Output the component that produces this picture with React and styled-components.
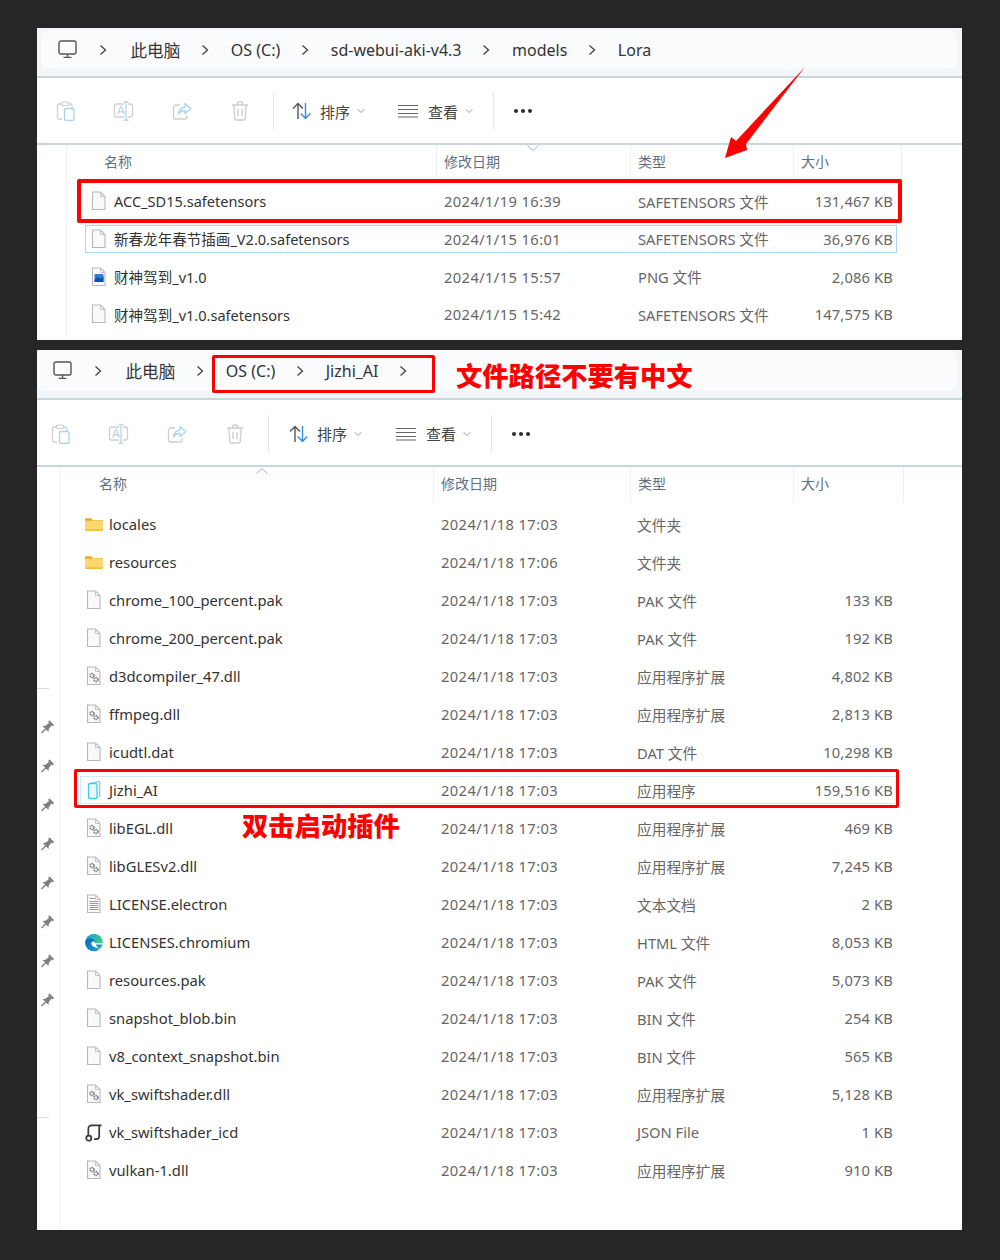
import React from "react";
import styled, { createGlobalStyle } from "styled-components";

const Global = createGlobalStyle`
  html, body { margin: 0; padding: 0; background: #262626; }
  body { font-family: "Noto Sans", "Noto Sans CJK SC", sans-serif; }
`;

const Page = styled.div`
  width: 1000px;
  height: 1260px;
  box-sizing: border-box;
  padding: 28px 38px 30px 37px;
  display: flex;
  flex-direction: column;
  gap: 10px;
  background: #262626;
`;
const Window = styled.section`
  position: relative;
  background: #fff;
  height: ${(p) => p.$h}px;
  display: flex;
  flex-direction: column;
  overflow: hidden;
`;
const AddressBar = styled.div`
  height: ${(p) => p.$h}px;
  box-sizing: border-box;
  flex: none;
  background: #f2f6f8;
  border-bottom: 2px solid #c6d6d9;
  padding: ${(p) => p.$top}px 5px 0 ${(p) => p.$inset}px;
`;
const AddressInner = styled.div`
  height: ${(p) => p.$h}px;
  background: #f9fbfd;
  border-radius: 8px;
  display: flex;
  align-items: center;
  padding-left: ${(p) => p.$pad}px;
  font-size: 16px;
  color: #333;
`;
const Crumb = styled.span`
  white-space: nowrap;
`;
const RootCrumb = styled.span`
  white-space: nowrap;
  margin-left: 2px;
  font-size: 16.6px;
`;
const Chevron = styled.svg`
  width: 8px;
  height: 12px;
  margin: 0 22px 0 20.5px;
  flex: none;
`;
const MonitorIcon = styled.svg`
  width: 19px;
  height: 19px;
  flex: none;
  margin-right: 1px;
`;
const Toolbar = styled.div`
  height: ${(p) => p.$h}px;
  flex: none;
  box-sizing: border-box;
  border-bottom: 2px solid #c6d6d9;
  display: flex;
  align-items: center;
  padding-left: ${(p) => p.$pad}px;
  padding-top: ${(p) => p.$top}px;
`;
const ToolIcon = styled.div`
  width: 46px;
  margin-right: 12px;
  display: flex;
  justify-content: center;
`;
const ToolDivider = styled.div`
  width: 1px;
  height: 38px;
  background: #e6e9ea;
  margin-left: ${(p) => p.$ml}px;
`;
const ToolMenu = styled.div`
  display: flex;
  align-items: center;
  font-size: 15px;
  color: #444;
  margin-left: ${(p) => p.$ml}px;
  gap: 8px;
`;
const LinesIcon = styled.svg`
  width: 20px;
  height: 14px;
  margin-right: 2px;
`;
const MiniChevron = styled.svg`
  width: 8px;
  height: 6px;
  margin-left: -1px;
`;
const Dots = styled.div`
  display: flex;
  gap: 3px;
  margin-left: 20px;
  span {
    width: 4px;
    height: 4px;
    border-radius: 50%;
    background: #2b2b2b;
  }
`;
const Content = styled.div`
  flex: 1;
  display: flex;
  min-height: 0;
`;
const Sidebar = styled.aside`
  flex: none;
  width: ${(p) => p.$w}px;
  display: flex;
  flex-direction: column;
`;
const SideRule = styled.div`
  height: 1px;
  width: 12px;
  background: #ddd;
  margin-top: ${(p) => p.$mt}px;
`;
const Pins = styled.div`
  display: flex;
  flex-direction: column;
  gap: 23px;
  margin: 31px 0 0 2px;
`;
const Main = styled.div`
  flex: 1;
  min-width: 0;
  border-left: 1px solid #f1f2f3;
`;
const HeaderRow = styled.div`
  display: grid;
  grid-template-columns: ${(p) => p.$cols};
  height: ${(p) => p.$h}px;
  font-size: 14px;
  color: #5f6f84;
`;
const HeaderCell = styled.div`
  display: flex;
  align-items: center;
  padding-left: ${(p) => p.$pad}px;
  padding-bottom: ${(p) => p.$bottom}px;
  border-right: 1px solid #eeeff0;
  margin-left: -1px;
`;
const RowList = styled.div`
  display: flex;
  flex-direction: column;
  gap: ${(p) => p.$gap}px;
  padding: ${(p) => p.$top}px 0 0 ${(p) => p.$left}px;
`;
const Row = styled.div`
  display: grid;
  grid-template-columns: ${(p) => p.$cols};
  width: ${(p) => p.$w}px;
  height: 28px;
  box-sizing: border-box;
  align-items: center;
  border: 1px solid ${(p) => p.$border || "transparent"};
  font-size: 14.7px;
  color: #666;
`;
const NameCell = styled.div`
  display: flex;
  align-items: center;
  gap: 6px;
  padding-left: 4px;
  color: #333;
  font-size: ${(p) => p.$size}px;
  white-space: nowrap;
`;
const IconSlot = styled.div`
  width: 18px;
  height: 20px;
  display: flex;
  align-items: center;
  justify-content: center;
  flex: none;
`;
const DateCell = styled.div`
  padding-left: ${(p) => p.$pad}px;
  white-space: nowrap;
  letter-spacing: 0.4px;
`;
const TypeCell = styled.div`
  padding-left: ${(p) => p.$pad}px;
  white-space: nowrap;
`;
const SizeCell = styled.div`
  text-align: right;
  padding-right: 3px;
  white-space: nowrap;
  letter-spacing: 0.15px;
`;
const SortCaret = styled.svg`
  position: absolute;
  left: ${(p) => p.$x}px;
  top: ${(p) => p.$y}px;
  width: 12px;
  height: 6px;
`;
const RedBox = styled.div`
  position: absolute;
  left: ${(p) => p.$x}px;
  top: ${(p) => p.$y}px;
  width: ${(p) => p.$w}px;
  height: ${(p) => p.$h}px;
  box-sizing: border-box;
  border: ${(p) => p.$t}px solid #fe0000;
  border-radius: 2px;
`;
const Callout = styled.div`
  position: absolute;
  left: ${(p) => p.$x}px;
  top: ${(p) => p.$y}px;
  font-family: "Noto Sans CJK SC", sans-serif;
  font-weight: 900;
  font-size: 26.3px;
  line-height: 32px;
  color: #fe0000;
  white-space: nowrap;
`;
const ArrowMark = styled.svg`
  position: absolute;
  left: 680px;
  top: 30px;
  width: 100px;
  height: 110px;
`;

const Chev = () => (
  <Chevron viewBox="0 0 8 12">
    <path d="M1.5 1.5 6.5 6l-5 4.5" fill="none" stroke="#444" strokeWidth="1.3" />
  </Chevron>
);
const Monitor = () => (
  <MonitorIcon viewBox="0 0 19 19">
    <rect x="1" y="1" width="17" height="13" rx="2" fill="none" stroke="#555" strokeWidth="1.4" />
    <path d="M9.5 14v3M5.5 17.4h8" stroke="#555" strokeWidth="1.4" />
  </MonitorIcon>
);
const Paste = () => (
  <svg width="20" height="20" viewBox="0 0 20 20" fill="none">
    <path d="M6 3H3a1.5 1.5 0 0 0-1.500 1.500v12A1.500 1.500 0 0 0 3 18h3" stroke="#cfcfcf" strokeWidth="1.300" />
    <path d="M13 3h1.500A1.500 1.500 0 0 1 16 4.500V7" stroke="#cfcfcf" strokeWidth="1.300" />
    <rect x="5.500" y="1" width="7" height="3.500" rx="1" stroke="#cfcfcf" strokeWidth="1.200" />
    <rect x="8.500" y="7.500" width="9.500" height="12" rx="2" stroke="#a9d3f2" strokeWidth="1.300" />
  </svg>
);
const Rename = () => (
  <svg width="22" height="20" viewBox="0 0 22 20" fill="none">
    <path d="M11 3H3.500A2 2 0 0 0 1.500 5v9a2 2 0 0 0 2 2H11M15 3h2a2.500 2.500 0 0 1 2.500 2.500v8A2.500 2.500 0 0 1 17 16h-2" stroke="#cfcfcf" strokeWidth="1.300" />
    <path d="M13 1v18M10.500.8h5M10.500 19.200h5" stroke="#a9d3f2" strokeWidth="1.200" />
    <path d="M4.500 13.500 7.600 5.500h.8l3.100 8M5.800 10.800h4.400" stroke="#bcd2e2" strokeWidth="1.200" />
  </svg>
);
const Share = () => (
  <svg width="20" height="18" viewBox="0 0 20 18" fill="none">
    <path d="M8 3H3.500A2 2 0 0 0 1.500 5v10a2 2 0 0 0 2 2H13a2 2 0 0 0 2-2v-2" stroke="#cfcfcf" strokeWidth="1.300" />
    <path d="M13 1.500 18.800 6.500 13 11.500V8.500c-3 0-5 1-6.500 3.500 .4-4 2.500-6.500 6.500-7z" stroke="#a9d3f2" strokeWidth="1.300" strokeLinejoin="round" />
  </svg>
);
const Trash = () => (
  <svg width="18" height="20" viewBox="0 0 18 20" fill="none" stroke="#cdcdcd" strokeWidth="1.300">
    <path d="M1 4h16M6.500 4V2.500A1.500 1.500 0 0 1 8 1h2a1.500 1.500 0 0 1 1.500 1.500V4" />
    <path d="M2.800 4l1 13.500A1.500 1.500 0 0 0 5.300 19h7.400a1.500 1.500 0 0 0 1.500-1.500L15.200 4M7 8v7M11 8v7" />
  </svg>
);
const SortArrows = () => (
  <svg width="20" height="18" viewBox="0 0 20 18" fill="none" strokeWidth="1.400">
    <path d="M6 17V1.500M1 6.500 6 1.500l5 5" stroke="#555" />
    <path d="M13.500 1v15.500M8.800 11.500l4.700 5 4.800-5" stroke="#2f8fdd" />
  </svg>
);
const Lines = () => (
  <LinesIcon viewBox="0 0 20 14" stroke="#666" strokeWidth="1.200">
    <path d="M0 1.500h20M0 5.500h20M0 9.500h20M0 13h20" />
  </LinesIcon>
);
const MiniChev = () => (
  <MiniChevron viewBox="0 0 8 6" fill="none">
    <path d="M.7 1.200 4 4.500l3.300-3.300" stroke="#999" />
  </MiniChevron>
);
const Pin = () => (
  <svg width="15" height="16" viewBox="0 0 16 16" fill="#7f7f7f">
    <g transform="rotate(45 8 8)">
      <rect x="4.500" y="0" width="7" height="2.200" rx=".5" />
      <path d="M6 2h4l.5 5 2 2.500h-9l2-2.500z" />
      <rect x="7.300" y="9" width="1.400" height="6.500" />
    </g>
  </svg>
);

const Page1 = () => (
  <path d="M1.500 1H9.500L14 5.500V18.500H1.500z" fill="#f9f9f9" stroke="#b8b8b8" strokeWidth="1.100" />
);
const Fold = () => <path d="M9.500 1v4.500H14" fill="none" stroke="#c4c4c4" />;
const FileIcon = () => (
  <svg width="16" height="20" viewBox="0 0 16 20">
    <Page1 />
    <Fold />
  </svg>
);
const PngIcon = () => (
  <svg width="16" height="20" viewBox="0 0 16 20">
    <Page1 />
    <Fold />
    <rect x="3.500" y="7" width="9" height="8" rx="1" fill="#2a7fd4" />
    <path d="M3.500 13 7 10l2.500 2 3-2.500V15h-9z" fill="#0f4fa5" />
  </svg>
);
const Gear = ({ x, y, r }) => (
  <circle cx={x} cy={y} r={r} fill="none" stroke="#7d7d7d" strokeWidth={r * 0.9} strokeDasharray="1.300 .6" />
);
const DllIcon = () => (
  <svg width="16" height="20" viewBox="0 0 16 20">
    <Page1 />
    <Fold />
    <Gear x="6" y="9.500" r="1.900" />
    <Gear x="10" y="13.500" r="1.900" />
  </svg>
);
const TextIcon = () => (
  <svg width="16" height="20" viewBox="0 0 16 20">
    <Page1 />
    <Fold />
    <path d="M3.500 4.500h5M3.500 7.500h9M3.500 9.500h9M3.500 11.500h9M3.500 13.500h9M3.500 15.500h9" stroke="#9a9a9a" strokeWidth="1" />
  </svg>
);
const FolderIcon = () => (
  <svg width="19" height="15" viewBox="0 0 19 15">
    <path d="M0 2a1 1 0 0 1 1-1h5.500l2 2H19v2H0z" fill="#eda81f" />
    <path d="M0 3.500h18a1 1 0 0 1 1 1V13a1 1 0 0 1-1 1H1a1 1 0 0 1-1-1z" fill="#fdd66f" />
    <path d="M0 12.800h19V13a1 1 0 0 1-1 1H1a1 1 0 0 1-1-1z" fill="#efb030" />
  </svg>
);
const JizhiIcon = () => (
  <svg width="15" height="20" viewBox="0 0 15 20" fill="none">
    <path d="M3 3.500 11.500 1.500a1 1 0 0 1 1.200 1V15.500a1 1 0 0 1-.8 1L5 18.500" stroke="#7cc8ee" strokeWidth="1.200" />
    <rect x="1.500" y="3.500" width="8.500" height="15" rx="1.500" fill="#e8f8ff" stroke="#35cdf2" strokeWidth="1.300" />
  </svg>
);
const EdgeIcon = () => (
  <svg width="21" height="21" viewBox="0 0 20 20">
    <defs>
      <linearGradient id="edgeTop" x1="0" y1="0" x2="1" y2="1">
        <stop offset="0" stopColor="#0f9fd0" />
        <stop offset="1" stopColor="#5fdc6a" />
      </linearGradient>
      <linearGradient id="edgeLow" x1="0" y1="0" x2="1" y2="1">
        <stop offset="0" stopColor="#0a64b8" />
        <stop offset="1" stopColor="#1fa4e0" />
      </linearGradient>
    </defs>
    <circle cx="10" cy="10" r="9.800" fill="url(#edgeTop)" />
    <path d="M.3 9.500C1 6 4.500 4.800 7.500 5.500 10.500 6.300 11.500 8.500 11 10.500H18.500c.6 3-.5 5-2.500 5.200-1 .1-1.800 0-2.800-.5 2 2 .5 4.700-3.200 4.600C4.500 19.800.1 15.500.3 9.500z" fill="url(#edgeLow)" />
    <path d="M7 11c0-1.500 1.200-2.300 2.500-2.100 1 .2 1.500 .9 1.500 1.900h8.800v1.500H12.500c-.3 1.500 .8 2.600 2.600 2.900-1.800.9-4.300 .5-5.600-.6C8 13.700 7 12.600 7 11z" fill="#fff" />
  </svg>
);
const JsonIcon = () => (
  <svg width="19" height="19" viewBox="0 0 19 19" fill="none" stroke="#3a3a3a" strokeWidth="1.800">
    <path d="M3.500 13V5.500A3.500 3.500 0 0 1 7 2h10.500M15 2.500V13.500A3 3 0 0 1 12 16.500H9.500" />
    <circle cx="4" cy="15.500" r="2.700" />
  </svg>
);

const icons = {
  file: FileIcon,
  png: PngIcon,
  dll: DllIcon,
  text: TextIcon,
  folder: FolderIcon,
  jizhi: JizhiIcon,
  edge: EdgeIcon,
  json: JsonIcon,
};

const d0 = "2024/1/18 17:03";
const upperRows = [
  { i: "file", n: "ACC_SD15.safetensors", d: "2024/1/19 16:39", t: "SAFETENSORS 文件", s: "131,467 KB" },
  { i: "file", n: "新春龙年春节插画_V2.0.safetensors", d: "2024/1/15 16:01", t: "SAFETENSORS 文件", s: "36,976 KB", b: "#a9d6f8" },
  { i: "png", n: "财神驾到_v1.0", d: "2024/1/15 15:57", t: "PNG 文件", s: "2,086 KB" },
  { i: "file", n: "财神驾到_v1.0.safetensors", d: "2024/1/15 15:42", t: "SAFETENSORS 文件", s: "147,575 KB" },
];
const lowerRows = [
  { i: "folder", n: "locales", d: d0, t: "文件夹", s: "" },
  { i: "folder", n: "resources", d: "2024/1/18 17:06", t: "文件夹", s: "" },
  { i: "file", n: "chrome_100_percent.pak", d: d0, t: "PAK 文件", s: "133 KB" },
  { i: "file", n: "chrome_200_percent.pak", d: d0, t: "PAK 文件", s: "192 KB" },
  { i: "dll", n: "d3dcompiler_47.dll", d: d0, t: "应用程序扩展", s: "4,802 KB" },
  { i: "dll", n: "ffmpeg.dll", d: d0, t: "应用程序扩展", s: "2,813 KB" },
  { i: "file", n: "icudtl.dat", d: d0, t: "DAT 文件", s: "10,298 KB" },
  { i: "jizhi", n: "Jizhi_AI", d: d0, t: "应用程序", s: "159,516 KB", b: "#d3e9fa" },
  { i: "dll", n: "libEGL.dll", d: d0, t: "应用程序扩展", s: "469 KB" },
  { i: "dll", n: "libGLESv2.dll", d: d0, t: "应用程序扩展", s: "7,245 KB" },
  { i: "text", n: "LICENSE.electron", d: d0, t: "文本文档", s: "2 KB" },
  { i: "edge", n: "LICENSES.chromium", d: d0, t: "HTML 文件", s: "8,053 KB" },
  { i: "file", n: "resources.pak", d: d0, t: "PAK 文件", s: "5,073 KB" },
  { i: "file", n: "snapshot_blob.bin", d: d0, t: "BIN 文件", s: "254 KB" },
  { i: "file", n: "v8_context_snapshot.bin", d: d0, t: "BIN 文件", s: "565 KB" },
  { i: "dll", n: "vk_swiftshader.dll", d: d0, t: "应用程序扩展", s: "5,128 KB" },
  { i: "json", n: "vk_swiftshader_icd", d: d0, t: "JSON File", s: "1 KB" },
  { i: "dll", n: "vulkan-1.dll", d: d0, t: "应用程序扩展", s: "910 KB" },
];

const ToolbarContent = ({ h, pad, top, m0, m1, m2, m3 }) => (
  <Toolbar $h={h} $pad={pad} $top={top}>
    <ToolIcon><Paste /></ToolIcon>
    <ToolIcon><Rename /></ToolIcon>
    <ToolIcon><Share /></ToolIcon>
    <ToolIcon><Trash /></ToolIcon>
    <ToolDivider $ml={m0} />
    <ToolMenu $ml={m1}><SortArrows />排序<MiniChev /></ToolMenu>
    <ToolMenu $ml={m2}><Lines />查看<MiniChev /></ToolMenu>
    <ToolDivider $ml={m3} />
    <Dots><span /><span /><span /></Dots>
  </Toolbar>
);

const FileRows = ({ rows, cols, pads, w, size }) =>
  rows.map((r) => {
    const Ico = icons[r.i];
    return (
      <Row key={r.n} $cols={cols} $border={r.b} $w={w}>
        <NameCell $size={size}><IconSlot><Ico /></IconSlot>{r.n}</NameCell>
        <DateCell $pad={pads[0]}>{r.d}</DateCell>
        <TypeCell $pad={pads[1]}>{r.t}</TypeCell>
        <SizeCell>{r.s}</SizeCell>
      </Row>
    );
  });

export default function App() {
  return (
    <Page>
      <Global />
      <Window $h={312}>
        <AddressBar $h={50} $top={2} $inset={4}>
          <AddressInner $h={39} $pad={17}>
            <Monitor />
            <Chev /><RootCrumb>此电脑</RootCrumb>
            <Chev /><Crumb>OS (C:)</Crumb>
            <Chev /><Crumb>sd-webui-aki-v4.3</Crumb>
            <Chev /><Crumb>models</Crumb>
            <Chev /><Crumb>Lora</Crumb>
          </AddressInner>
        </AddressBar>
        <ToolbarContent h={67} pad={6} top={1} m0={-2} m1={18} m2={33} m3={20} />
        <Content>
          <Sidebar $w={29} />
          <Main>
            <HeaderRow $h={33} $cols="370px 194px 163px 108px">
              <HeaderCell $pad={38} $bottom={2}>名称</HeaderCell>
              <HeaderCell $pad={8} $bottom={2}>修改日期</HeaderCell>
              <HeaderCell $pad={8} $bottom={2}>类型</HeaderCell>
              <HeaderCell $pad={8} $bottom={2}>大小</HeaderCell>
            </HeaderRow>
            <RowList $gap={9.75} $top={9} $left={18}>
              <FileRows rows={upperRows} cols="351px 194px 163px 1fr" pads={[7, 7]} w={812} size={14.55} />
            </RowList>
          </Main>
        </Content>
        <SortCaret $x={490} $y={117} viewBox="0 0 12 6"><path d="M.5.500 6 5.500 11.500.5" fill="none" stroke="#aaa" /></SortCaret>
        <RedBox $x={40} $y={151} $w={825} $h={44} $t={4} />
        <ArrowMark viewBox="680 30 100 110">
          <polygon points="768,39 709,116 710,122 688,130 694,109 699,113" fill="#fe0000" />
        </ArrowMark>
      </Window>
      <Window $h={880}>
        <AddressBar $h={50} $top={0} $inset={0}>
          <AddressInner $h={41} $pad={16}>
            <Monitor />
            <Chev /><RootCrumb>此电脑</RootCrumb>
            <Chev /><Crumb>OS (C:)</Crumb>
            <Chev /><Crumb>Jizhi_AI</Crumb>
            <Chev />
          </AddressInner>
        </AddressBar>
        <ToolbarContent h={67} pad={1} top={2} m0={-2} m1={20} m2={34} m3={20} />
        <Content>
          <Sidebar $w={23}>
            <SideRule $mt={221} />
            <Pins>
              {Array.from({ length: 8 }, (_, i) => <Pin key={i} />)}
            </Pins>
            <SideRule $mt={108} />
          </Sidebar>
          <Main>
            <HeaderRow $h={35} $cols="373px 197px 163px 110px">
              <HeaderCell $pad={39} $bottom={3}>名称</HeaderCell>
              <HeaderCell $pad={8} $bottom={3}>修改日期</HeaderCell>
              <HeaderCell $pad={8} $bottom={3}>类型</HeaderCell>
              <HeaderCell $pad={8} $bottom={3}>大小</HeaderCell>
            </HeaderRow>
            <RowList $gap={10} $top={8} $left={19}>
              <FileRows rows={lowerRows} cols="353px 196px 163px 1fr" pads={[7, 7]} w={817} size={14.75} />
            </RowList>
          </Main>
        </Content>
        <SortCaret $x={219} $y={118} viewBox="0 0 12 6"><path d="M.5 5.500 6 .5 11.500 5.500" fill="none" stroke="#aaa" /></SortCaret>
        <RedBox $x={175} $y={5} $w={223} $h={38} $t={3} />
        <Callout $x={419} $y={9}>文件路径不要有中文</Callout>
        <RedBox $x={37} $y={419} $w={825} $h={39} $t={3} />
        <Callout $x={205} $y={459}>双击启动插件</Callout>
      </Window>
    </Page>
  );
}
